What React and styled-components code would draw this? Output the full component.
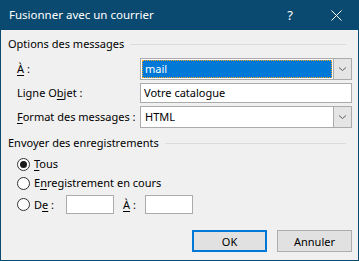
import React from "react";
import styled, { createGlobalStyle } from "styled-components";

const GlobalStyle = createGlobalStyle`
  html, body {
    margin: 0;
    padding: 0;
    background: #f0f0f0;
  }
  body {
    font-family: "Noto Sans", "Open Sans", sans-serif;
    font-size: 11px;
    color: #000;
  }
`;

const Window = styled.div`
  box-sizing: border-box;
  width: 359px;
  height: 261px;
  border: 1px solid #0b4a70;
  border-top: none;
  background: #f0f0f0;
  display: flex;
  flex-direction: column;
`;

const TitleBar = styled.div`
  height: 30px;
  background: #0b4a70;
  color: #fff;
  display: flex;
  align-items: center;
  padding-left: 9px;
  margin: 0 -1px;
`;

const Title = styled.div`
  flex: 1;
  font-size: 11.5px;
  line-height: 16px;
`;

const TitleButton = styled.div`
  width: 46px;
  height: 30px;
  display: flex;
  align-items: center;
  justify-content: center;
  font-size: 13px;
`;

const Body = styled.div`
  display: flex;
  flex-direction: column;
  padding: 6px 6px 0 7px;
`;

const GroupHeader = styled.div`
  display: flex;
  align-items: center;
  gap: 6px;
  line-height: 16px;
  margin-top: ${(p) => p.$top || 0}px;

  &::after {
    content: "";
    flex: 1;
    height: 1px;
    background: #dcdcdc;
    margin-right: 6px;
  }
`;

const FormGrid = styled.div`
  display: grid;
  grid-template-columns: 123px 212px;
  row-gap: 3px;
  padding-left: 9px;
  margin-top: 6px;
  align-items: center;
`;

const Label = styled.div`
  line-height: 16px;
  white-space: nowrap;
`;

const Key = styled.span`
  text-decoration: underline;
  text-underline-offset: 2px;
`;

const Select = styled.div`
  box-sizing: border-box;
  height: 22px;
  border: 1px solid #ababab;
  background: #fff;
  display: flex;
  padding: 1px 0 1px 1px;
`;

const SelectValue = styled.div`
  flex: 1;
  box-sizing: border-box;
  line-height: 16px;
  padding-left: 2px;
  background: ${(p) => (p.$active ? "#0078d7" : "#fff")};
  color: ${(p) => (p.$active ? "#fff" : "#000")};
  border: 1px dotted ${(p) => (p.$active ? "#f5a623" : "transparent")};
  margin-right: 1px;
`;

const DropButton = styled.div`
  width: 17px;
  margin: -1px 0;
  background: #e5e5e5;
  border-left: 1px solid #ababab;
  display: flex;
  align-items: center;
  justify-content: center;
`;

const TextInput = styled.div`
  box-sizing: border-box;
  height: ${(p) => p.$h || 20}px;
  width: ${(p) => (p.$w ? `${p.$w}px` : "auto")};
  border: 1px solid #ababab;
  background: #fff;
  line-height: 18px;
  padding-left: 3px;
`;

const Radios = styled.div`
  display: flex;
  flex-direction: column;
  padding-left: 9px;
  margin-top: 5px;
  gap: 3px;
`;

const RadioRow = styled.div`
  display: flex;
  align-items: center;
  height: ${(p) => p.$h || 16}px;
  margin-top: ${(p) => p.$top || 0}px;
  gap: 4px;
`;

const Circle = styled.div`
  box-sizing: border-box;
  width: 13px;
  height: 13px;
  border-radius: 50%;
  border: 1px solid #333;
  background: #fff;
  display: flex;
  align-items: center;
  justify-content: center;

  &::after {
    content: "";
    width: 7px;
    height: 7px;
    border-radius: 50%;
    background: ${(p) => (p.$on ? "#1a1a1a" : "transparent")};
  }
`;

const RangeLabel = styled.div`
  line-height: 16px;
  width: ${(p) => p.$w}px;
  margin-left: ${(p) => p.$left || 0}px;
`;

const Buttons = styled.div`
  display: flex;
  justify-content: flex-end;
  gap: 10px;
  margin-top: 16px;
`;

const Button = styled.div`
  box-sizing: border-box;
  width: 75px;
  height: 22px;
  background: #e1e1e1;
  border: ${(p) => (p.$default ? "2px solid #0078d7" : "1px solid #adadad")};
  display: flex;
  align-items: center;
  justify-content: center;
`;

const Chevron = () => (
  <svg width="9" height="6" viewBox="0 0 9 6">
    <path d="M1 1.5 L4.5 4.5 L8 1.5" fill="none" stroke="#606060" strokeWidth="1" />
  </svg>
);

const CloseIcon = () => (
  <svg width="11" height="11" viewBox="0 0 11 11">
    <path d="M0.5 0.5 L10.5 10.5 M10.5 0.5 L0.5 10.5" stroke="#fff" strokeWidth="1" />
  </svg>
);

export default function App() {
  return (
    <>
      <GlobalStyle />
      <Window>
        <TitleBar>
          <Title>Fusionner avec un courrier</Title>
          <TitleButton>?</TitleButton>
          <TitleButton>
            <CloseIcon />
          </TitleButton>
        </TitleBar>
        <Body>
          <GroupHeader>Options des messages</GroupHeader>
          <FormGrid>
            <Label>
              <Key>À</Key> :
            </Label>
            <Select>
              <SelectValue $active>mail</SelectValue>
              <DropButton>
                <Chevron />
              </DropButton>
            </Select>
            <Label>
              Ligne O<Key>b</Key>jet :
            </Label>
            <TextInput>Votre catalogue</TextInput>
            <Label>
              <Key>F</Key>ormat des messages :
            </Label>
            <Select>
              <SelectValue>HTML</SelectValue>
              <DropButton>
                <Chevron />
              </DropButton>
            </Select>
          </FormGrid>

          <GroupHeader $top={7}>Envoyer des enregistrements</GroupHeader>
          <Radios>
            <RadioRow>
              <Circle $on />
              <Label>
                <Key>T</Key>ous
              </Label>
            </RadioRow>
            <RadioRow>
              <Circle />
              <Label>
                E<Key>n</Key>registrement en cours
              </Label>
            </RadioRow>
            <RadioRow $h={19} $top={1}>
              <Circle />
              <RangeLabel $w={28}>
                D<Key>e</Key> :
              </RangeLabel>
              <TextInput $w={48} $h={19} />
              <RangeLabel $w={18} $left={5}>
                <Key>À</Key> :
              </RangeLabel>
              <TextInput $w={48} $h={19} />
            </RadioRow>
          </Radios>

          <Buttons>
            <Button $default>OK</Button>
            <Button>Annuler</Button>
          </Buttons>
        </Body>
      </Window>
    </>
  );
}
